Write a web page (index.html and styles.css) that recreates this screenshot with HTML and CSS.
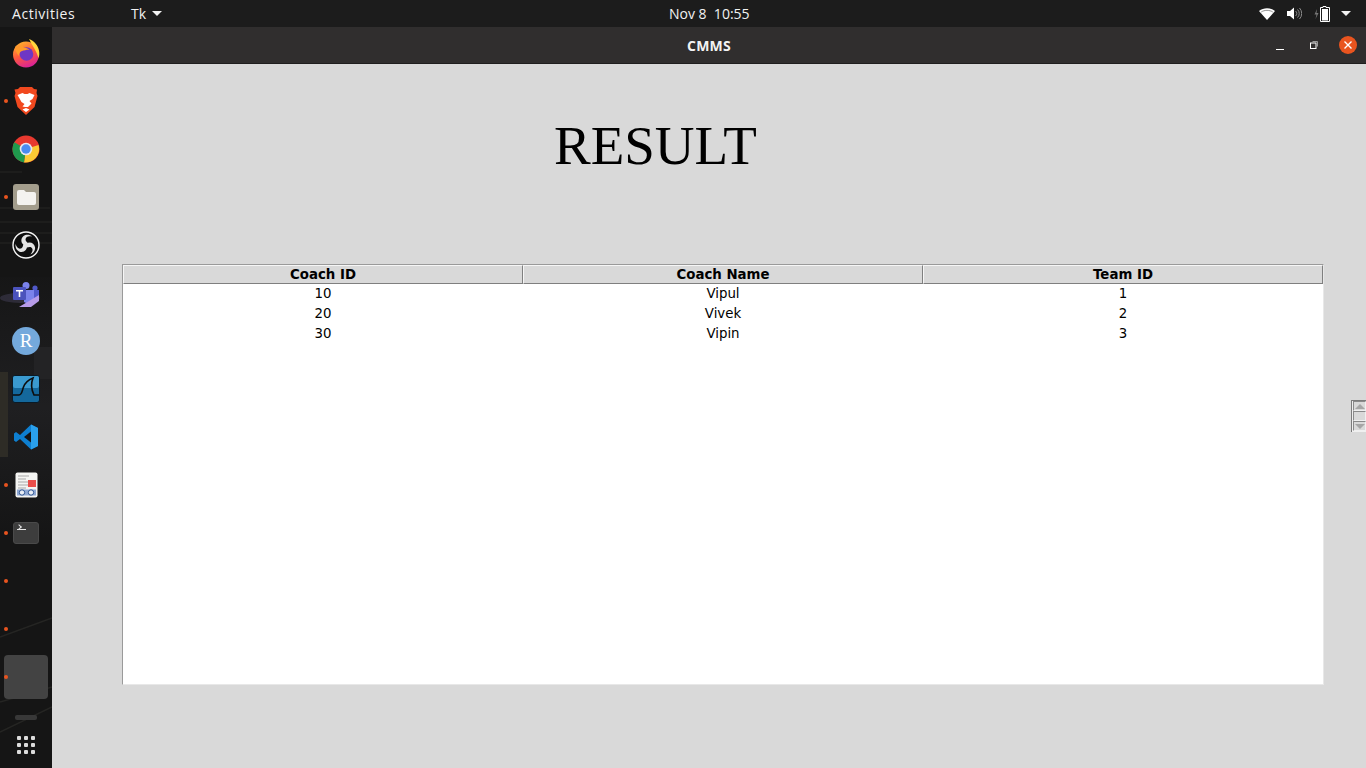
FILE: index.html
```html
<!DOCTYPE html>
<html lang="en">
<head>
<meta charset="utf-8">
<title>CMMS</title>
<link rel="stylesheet" href="styles.css">
</head>
<body>
<header class="topbar">
  <div class="top-left"><span class="activities">Activities</span><span class="appmenu">Tk<i class="caret"></i></span></div>
  <div class="clock">Nov 8&nbsp; 10:55</div>
  <div class="tray">
    <svg class="t-wifi" width="16" height="12" viewBox="0 0 16 12"><path d="M0 3C4.500-.8 11.500-.8 16 3L8 12Z" fill="#fff"/><path d="M2.200 4C5.500 1.800 10.500 1.800 13.800 4" fill="none" stroke="#1c1c1c" stroke-width=".8" opacity=".6"/></svg>
    <svg class="t-vol" width="15" height="13" viewBox="0 0 15 13"><path d="M0 4h3l4-3.500v12L3 9H0Z" fill="#fff"/><path d="M8.500 4a3 3 0 0 1 0 5M10.500 2.500a5.500 5.500 0 0 1 0 8M12.500 1a8 8 0 0 1 0 11" fill="none" stroke="#8a8a8a" stroke-width="1"/></svg>
    <svg class="t-bat" width="17" height="16" viewBox="0 0 17 16"><path d="M3 3 .5 8.500h2L1.500 13 4.500 7h-2Z" fill="#777"/><path d="M9 .5h3v1h3.500v14h-9v-14H9Z" fill="none" stroke="#fff" stroke-width="1"/><rect x="8" y="3" width="6" height="11.500" fill="#fff"/></svg>
    <i class="caret"></i>
  </div>
</header>
<div class="desktop">
  <nav class="dock">
    <svg class="wall" width="52" height="741" viewBox="0 0 52 741" aria-hidden="true">
      <path d="M0 145h22M0 181h50M0 195h52M0 206h52M0 216h52" stroke="#272725" stroke-width="1" fill="none"/>
      <rect x="0" y="250" width="52" height="260" fill="#1f1f21"/>
      <rect x="0" y="250" width="52" height="260" fill="url(#fade)"/>
      <rect x="0" y="345" width="8" height="85" fill="#2e2c26"/>
      <rect x="34" y="320" width="18" height="32" fill="#232325"/>
      <ellipse cx="20" cy="271" rx="20" ry="5" fill="#4a4460" opacity=".45"/>
      <path d="M0 610 52 591M0 675 52 660M0 705 52 680" stroke="#252523" stroke-width="1.500" fill="none"/>
      <defs><linearGradient id="fade" x1="0" x2="0" y1="0" y2="1"><stop offset="0" stop-color="#141414" stop-opacity=".8"/><stop offset=".5" stop-color="#141414" stop-opacity="0"/><stop offset="1" stop-color="#141414" stop-opacity=".9"/></linearGradient></defs>
    </svg>

    <div class="slot">
      <svg width="28" height="30" viewBox="0 0 28 30"><defs><linearGradient id="ff" x1=".2" y1="0" x2=".6" y2="1"><stop offset="0" stop-color="#ffb52e"/><stop offset=".5" stop-color="#ff5a3c"/><stop offset="1" stop-color="#d9209a"/></linearGradient></defs><circle cx="14" cy="16.500" r="13" fill="url(#ff)"/><path d="M17 1c5 2 9 6 10 11.500.5 3 .5 5-.5 7.500-2-7-6-12-9.500-19Z" fill="#ffd53d"/><circle cx="14.500" cy="16" r="6.800" fill="#6e37c4"/><path d="M3 8c1 1 2 1.500 3.500 1.500 1-2 3-3 5-3-1 1.500-1 2.500 0 3 2 0 5 1 6 2.500-2-.5-5 .5-7.500 1-2.500.5-3.500 3-3 5-2.500-2.500-4-6-4-10Z" fill="#ff9a2a"/></svg>
    </div>
    <div class="slot run">
      <svg width="24" height="30" viewBox="0 0 24 30"><path d="M6 1h12l2 2 3 .5-.5 3.500 1 3-3 11-8.500 8-8.500-8-3-11 1-3L.5 3.500 4 3Z" fill="#f1491f"/><path d="M12 26l-3.500-2.500L12 22l3.500 1.500ZM3.500 9l5-2 2 1h3l2-1 5 2-2 4-3 2 2 2.500-3.500 3.500h-3L8.500 20.500l2-2.500-3-2Z" fill="#fff"/></svg>
    </div>
    <div class="slot">
      <svg width="28" height="28" viewBox="0 0 28 28"><circle cx="14" cy="14" r="13.500" fill="#e8392f"/><path d="M14 14 26.500 10A13.500 13.500 0 0 1 12 27.400Z" fill="#fcc934"/><path d="M14 14 12 27.400A13.500 13.500 0 0 1 2.300 7.200Z" fill="#1f9a4d"/><circle cx="14" cy="14" r="6.300" fill="#e8e8ee"/><circle cx="14" cy="14" r="4.700" fill="#4a8cf0"/></svg>
    </div>
    <div class="slot run">
      <div class="tile folder-tile"><svg width="19" height="15" viewBox="0 0 19 15"><path d="M2 0h5l2 2h8a2 2 0 0 1 2 2v9a2 2 0 0 1-2 2H2a2 2 0 0 1-2-2V2a2 2 0 0 1 2-2Z" fill="#f4f3ef"/></svg></div>
    </div>
    <div class="slot">
      <svg width="28" height="28" viewBox="0 0 28 28"><circle cx="14" cy="14" r="13" fill="#0e0e0e" stroke="#f4f4f4" stroke-width="1.400"/><g fill="#e4e4e4"><path d="M13 14.500C9 13 8 8 11.500 5 14 3 18 3.500 20 5.500 17 4.500 13.500 5.500 13.500 8.500c0 2 2 2.500 2.500 4-.5 1-1.800 2-3 2Z"/><path d="M13 14.500C9 13 8 8 11.500 5 14 3 18 3.500 20 5.500 17 4.500 13.500 5.500 13.500 8.500c0 2 2 2.500 2.500 4-.5 1-1.800 2-3 2Z" transform="rotate(120 14 14)"/><path d="M13 14.500C9 13 8 8 11.500 5 14 3 18 3.500 20 5.500 17 4.500 13.500 5.500 13.500 8.500c0 2 2 2.500 2.500 4-.5 1-1.800 2-3 2Z" transform="rotate(240 14 14)"/></g></svg>
    </div>
    <div class="slot">
      <svg class="teams" width="28" height="26" viewBox="0 0 28 26"><circle cx="14" cy="3.500" r="3.500" fill="#7b83eb"/><circle cx="23" cy="6" r="2.600" fill="#5059c9"/><path d="M12 8h10v11l-4 4-6-3Z" fill="#7b83eb"/><path d="M22 8h5v8l-5 3Z" fill="#5059c9"/><rect x="1" y="5" width="13" height="13" rx="1" fill="#4b53bc"/><path d="M4 8h7v1.500H8.300V15H6.700V9.500H4Z" fill="#fff"/><path d="M7 25 27 13v6l-8 6Z" fill="#b79be8"/></svg>
    </div>
    <div class="slot">
      <svg width="28" height="28" viewBox="0 0 28 28"><circle cx="14" cy="14" r="14" fill="#74a9dc"/><text x="14" y="20" text-anchor="middle" class="r-letter">R</text></svg>
    </div>
    <div class="slot">
      <svg width="28" height="28" viewBox="0 0 28 28"><rect x=".5" y=".5" width="27" height="27" rx="2.500" fill="#14689c" stroke="#0a1a26"/><rect x="1" y="1" width="26" height="12" rx="2" fill="#3a9ad0"/><path d="M1 20h6c3 0 3-4 4.500-8C13 8 16 5 21 3c-2 5-1.500 12 1 17h5" fill="none" stroke="#0d0d0d" stroke-width="1.600"/></svg>
    </div>
    <div class="slot">
      <svg width="26" height="26" viewBox="0 0 26 26"><path d="M18 .5 25 4v18l-7 3.500L7 15l-4 3-2-1.500V9.500L3 8l4 3Z" fill="#0e7fd0"/><path d="M18 .5 25 4v18l-7 3.500Z" fill="#2aa0ec"/><path d="M18 7.500 11 13l7 5.500Z" fill="#141414"/></svg>
    </div>
    <div class="slot run">
      <svg width="23" height="26" viewBox="0 0 23 26"><rect width="22" height="25" x=".5" y=".5" rx="2" fill="#f4f4f2"/><path d="M3 4h11M3 7h8M3 10h10M3 13h10M3 16h8" stroke="#a8a8a8" stroke-width="1"/><rect x="13" y="8" width="8" height="7" fill="#ea4e4a"/><rect x="2" y="17.500" width="19" height="6" fill="#8fa8d4"/><circle cx="7" cy="20.500" r="2.700" fill="#e8edf5" stroke="#2e5592"/><circle cx="16" cy="20.500" r="2.700" fill="#e8edf5" stroke="#2e5592"/></svg>
    </div>
    <div class="slot run">
      <div class="tile term-tile"><span class="prompt"></span></div>
    </div>
    <div class="slot run"></div>
    <div class="slot run"></div>
    <div class="slot run active"></div>
    <div class="sep"></div>
    <div class="grid-btn"><i></i><i></i><i></i><i></i><i></i><i></i><i></i><i></i><i></i></div>
  </nav>
  <main class="window">
    <div class="titlebar">
      <span class="wtitle">CMMS</span>
      <div class="wbtns">
        <svg class="w-min" width="10" height="10" viewBox="0 0 10 10"><path d="M1 9.500h8" stroke="#fff" stroke-width="1"/></svg>
        <svg width="10" height="10" viewBox="0 0 10 10"><path d="M3.500 1.500h5v5" fill="none" stroke="#9a9a9a"/><rect x="1.500" y="3" width="5.500" height="5.500" fill="none" stroke="#fff"/></svg>
        <span class="close"><svg width="10" height="10" viewBox="0 0 10 10"><path d="M1.500 1.500l7 7M8.500 1.500l-7 7" stroke="#fff" stroke-width="1.400"/></svg></span>
      </div>
    </div>
    <div class="content">
      <h1 class="result">RESULT</h1>
      <div class="tree">
        <div class="row head"><div class="cell">Coach ID</div><div class="cell">Coach Name</div><div class="cell">Team ID</div></div>
        <div class="row"><div class="cell">10</div><div class="cell">Vipul</div><div class="cell">1</div></div>
        <div class="row"><div class="cell">20</div><div class="cell">Vivek</div><div class="cell">2</div></div>
        <div class="row"><div class="cell">30</div><div class="cell">Vipin</div><div class="cell">3</div></div>
      </div>
      <div class="scroll">
        <div class="sbtn"><i class="up"></i></div>
        <div class="sbtn"></div>
        <div class="sbtn"><i class="down"></i></div>
      </div>
    </div>
  </main>
</div>
</body>
</html>
```

FILE: styles.css
```css
* { box-sizing: border-box; }
html, body { margin: 0; height: 100%; overflow: hidden; }
body { display: flex; flex-direction: column; width: 1366px; height: 768px; background: #141414; font-family: "Open Sans", sans-serif; }

.topbar { height: 27px; flex: none; background: #1c1c1c; color: #f2f2f2; font-size: 14px; display: grid; grid-template-columns: 669px 80px 1fr; align-items: center; white-space: nowrap; }
.top-left { display: flex; align-items: center; padding-left: 12px; }
.activities { width: 119px; letter-spacing: .55px; }
.appmenu { display: flex; align-items: center; gap: 6px; }
.caret { width: 0; height: 0; border-left: 5px solid transparent; border-right: 5px solid transparent; border-top: 5px solid #f2f2f2; display: block; }
.clock { font-size: 14px; }
.tray { display: flex; justify-content: flex-end; align-items: center; padding-right: 15px; }
.t-wifi { margin-right: 12px; }
.t-vol { margin-right: 12px; }
.t-bat { margin-right: 10px; }

.desktop { flex: 1; display: flex; min-height: 0; }
.dock { width: 52px; flex: none; position: relative; background: #151515; display: flex; flex-direction: column; align-items: center; padding-top: 2px; }
.wall { position: absolute; left: 0; top: 0; }
.slot { width: 44px; height: 48px; flex: none; display: flex; align-items: center; justify-content: center; position: relative; }
.slot.run::before { content: ""; position: absolute; left: 0; top: 22px; width: 4px; height: 4px; border-radius: 50%; background: #e9541f; }
.slot.active { background: #434343; height: 44px; margin-top: 2px; margin-bottom: 2px; border-radius: 4px; }
.slot.active::before { top: 20px; }
.teams { margin-top: 4px; }
.tile { width: 26px; height: 26px; border-radius: 3px; display: flex; align-items: center; justify-content: center; position: relative; }
.folder-tile { background: #a39d8c; }
.term-tile { height: 22px; background: #3d3d3d; border: 1px solid #4a4a4a; align-items: flex-start; justify-content: flex-start; padding: 2px 3px; }
.prompt { display: block; width: 9px; height: 5px; border-bottom: 1px solid #e6e6e6; position: relative; }
.prompt::before { content: ""; position: absolute; left: 0; top: 0; width: 3px; height: 3px; border-top: 1px solid #e6e6e6; border-right: 1px solid #e6e6e6; transform: rotate(45deg); }
.sep { position: relative; width: 22px; height: 5px; margin-top: 14px; border-radius: 2px; background: #383838; }
.grid-btn { position: relative; margin-top: 16px; display: grid; grid-template-columns: repeat(3, 4px); gap: 3px; }
.grid-btn i { width: 4px; height: 4px; background: #dcdcdc; border-radius: 1px; display: block; }
.r-letter { font-family: "Liberation Serif", serif; font-size: 19px; fill: #fff; }

.window { flex: 1; display: flex; flex-direction: column; min-width: 0; }
.titlebar { height: 37px; flex: none; background: #302e2e; border-bottom: 1px solid #1f1e1e; position: relative; display: flex; align-items: center; justify-content: center; }
.wtitle { color: #f3f3f3; font-size: 14px; font-weight: 700; letter-spacing: .25px; padding-top: 1px; }
.wbtns { position: absolute; right: 9px; top: 0; bottom: 0; display: flex; align-items: center; gap: 20px; }
.w-min { margin-right: 4px; }
.close { width: 18px; height: 18px; border-radius: 50%; background: #e9541f; display: flex; align-items: center; justify-content: center; }

.content { flex: 1; background: #d9d9d9; position: relative; padding: 48px 42px 0 70px; }
.result { margin: 0 0 0 432px; height: 152px; font-family: "Liberation Serif", serif; font-weight: 400; font-size: 55px; line-height: 68px; color: #000; }
.tree { width: 1202px; height: 421px; background: #fff; border-left: 1px solid #9a9a9a; border-top: 1px solid #9a9a9a; border-right: 1px solid #e8e8e8; border-bottom: 1px solid #e8e8e8; font-family: "DejaVu Sans", sans-serif; font-size: 13.330px; color: #000; }
.row { display: grid; grid-template-columns: repeat(3, 400px); grid-template-rows: 20px; height: 20px; line-height: 19px; text-align: center; }
.head { background: #d9d9d9; font-weight: 700; grid-template-rows: 19px; height: 19px; line-height: 18px; }
.head .cell { height: 19px; border-top: 1px solid #f6f6f6; border-left: 1px solid #f6f6f6; border-right: 1px solid #7f7f7f; border-bottom: 1px solid #7f7f7f; }
.scroll { position: absolute; left: 1299px; top: 336px; width: 15px; height: 32px; border-left: 1px solid #7c7c7c; border-top: 1px solid #7c7c7c; padding-left: 1px; display: flex; flex-direction: column; background: #f0f0f0; }
.sbtn { height: 10px; flex: none; background: #d9d9d9; border-right: 1px solid #f0f0f0; border-bottom: 1px solid #f0f0f0; border-left: 1px solid #8a8a8a; border-top: 1px solid #8a8a8a; display: flex; align-items: center; justify-content: center; }
.up { width: 0; height: 0; border-left: 5px solid transparent; border-right: 5px solid transparent; border-bottom: 5px solid #a6a6a6; }
.down { width: 0; height: 0; border-left: 5px solid transparent; border-right: 5px solid transparent; border-top: 5px solid #a6a6a6; }
```
